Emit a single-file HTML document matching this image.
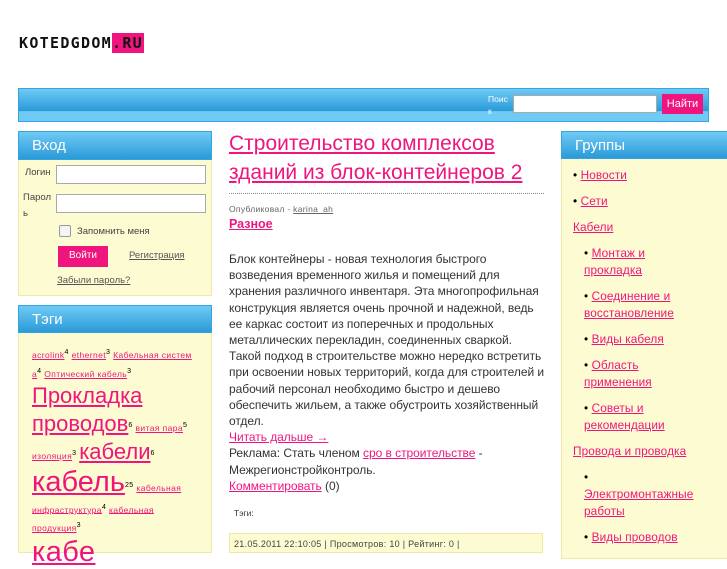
<!DOCTYPE html>
<html><head><meta charset="utf-8"><style>
*{margin:0;padding:0;box-sizing:border-box}
body{width:727px;height:545px;overflow:hidden;background:#fff;font-family:"Liberation Sans","DejaVu Sans",sans-serif;position:relative}
a{color:#f0157e;text-decoration:underline}
.abs{position:absolute}
.hdr{background:linear-gradient(#6fcaf5,#2a9ad8);border:1px solid #34a5e0;color:#fff;font-size:15px;padding-left:13px;line-height:27px}
.box{background:#fdfbd2;border:1px solid #f2e8a6;border-top:none}
input.t{border:1px solid #aaa;background:#fff;position:absolute;height:19px}
.btn{background:#f0157e;color:#fff;font-size:11px;text-align:center;position:absolute}
.body{font-size:12px;color:#333;line-height:16.2px;letter-spacing:-0.05px;white-space:nowrap}
ul{list-style:none}
.g li{font-size:11.8px;line-height:17px;letter-spacing:0.1px;white-space:nowrap}
</style></head><body>
<div class="abs" style="left:19px;top:33px;font:bold 15px 'DejaVu Sans Mono',monospace;letter-spacing:1.3px;color:#111;line-height:20px">KOTEDGDOM<span style="background:#f0157e;padding:1px 1px 1px 0">.RU</span></div>

<div class="abs" style="left:18px;top:88px;width:691px;height:34px;background:linear-gradient(#6fcaf5 0%,#2a9ad8 68%,#6fcaf5 70%,#6fcaf5 100%);border:1px solid #34a5e0"></div>
<div class="abs" style="left:488px;top:93px;font-size:8.5px;color:#fff;line-height:12px;width:24px">Поис<br>к</div>
<input class="t" style="left:513px;top:95px;width:144px;height:18px">
<div class="btn" style="left:662px;top:94px;width:41px;height:20px;line-height:20px">Найти</div>

<!-- Login -->
<div class="abs hdr" style="left:18px;top:131px;width:194px;height:29px">Вход</div>
<div class="abs box" style="left:18px;top:160px;width:194px;height:136px"></div>
<div class="abs" style="left:25px;top:167px;font-size:9.5px;color:#444">Логин</div>
<input class="t" style="left:56px;top:165px;width:150px">
<div class="abs" style="left:23px;top:190px;font-size:9.5px;color:#444;line-height:16px;width:28px">Парол<br>ь</div>
<input class="t" style="left:56px;top:194px;width:150px">
<div class="abs" style="left:59px;top:225px;width:12px;height:12px;border:1px solid #999;background:#f4f4f4;border-radius:2px"></div>
<div class="abs" style="left:77px;top:226px;font-size:9.5px;color:#444">Запомнить меня</div>
<div class="btn" style="left:58px;top:246px;width:50px;height:21px;line-height:20px;font-size:10px">Войти</div>
<a class="abs" style="left:129px;top:250px;font-size:9.5px;color:#555">Регистрация</a>
<a class="abs" style="left:57px;top:275px;font-size:9.5px;color:#555">Забыли пароль?</a>

<!-- Tags -->
<div class="abs hdr" style="left:18px;top:305px;width:194px;height:28px">Тэги</div>
<div class="abs box" style="left:18px;top:333px;width:194px;height:220px"></div>
<div class="abs" style="left:32px;top:344px;width:175px;line-height:16px;font-size:8.5px;letter-spacing:0.4px;white-space:nowrap">
<a>acrolink</a><sup>4</sup> <a>ethernet</a><sup>3</sup> <a>Кабельная систем</a><br><a>а</a><sup>4</sup> <a>Оптический кабель</a><sup>3</sup><br>
<span style="font-size:22px;line-height:28px;letter-spacing:0"><a>Прокладка</a></span><br>
<span style="font-size:22px;line-height:28px;letter-spacing:0"><a>проводов</a></span><sup>6</sup> <a>витая пара</a><sup>5</sup><br>
<a>изоляция</a><sup>3</sup> <span style="font-size:22px;line-height:28px;letter-spacing:0"><a>кабели</a></span><sup>6</sup><br>
<span style="font-size:29px;line-height:33px;letter-spacing:0"><a>кабель</a></span><sup>25</sup> <a>кабельная</a><br>
<a>инфраструктура</a><sup>4</sup> <a>кабельная</a><br><a>продукция</a><sup>3</sup><br>
<span style="font-size:29px;line-height:33px"><a>кабе</a></span>
</div>

<!-- Center -->
<div class="abs" style="left:229px;top:129px;width:320px;font-size:21px;line-height:29px;white-space:nowrap"><a>Строительство комплексов<br>зданий из блок-контейнеров 2</a></div>
<div class="abs" style="left:229px;top:193px;width:315px;border-top:1px dotted #888"></div>
<div class="abs" style="left:229px;top:204px;font-size:8.5px;color:#666;letter-spacing:0.3px">Опубликовал - <a style="color:#666">karina_ah</a></div>
<div class="abs" style="left:229px;top:217px;font-size:12.5px;font-weight:bold"><a>Разное</a></div>
<div class="abs body" style="left:229px;top:251px;width:320px">Блок контейнеры - новая технология быстрого<br>возведения временного жилья и помещений для<br>хранения различного инвентаря. Эта многопрофильная<br>конструкция является очень прочной и надежной, ведь<br>ее каркас состоит из поперечных и продольных<br>металлических перекладин, соединенных сваркой.<br>Такой подход в строительстве можно нередко встретить<br>при освоении новых территорий, когда для строителей и<br>рабочий персонал необходимо быстро и дешево<br>обеспечить жильем, а также обустроить хозяйственный<br>отдел.<br><a>Читать дальше →</a><br>Реклама: Стать членом <a>сро в строительстве</a> -<br>Межрегионстройконтроль.<br><a>Комментировать</a> (0)</div>
<div class="abs" style="left:234px;top:508px;font-size:8.5px;color:#333">Тэги:</div>
<div class="abs" style="left:229px;top:533px;width:314px;height:20px;background:#fdfbd2;border:1px solid #f2e8a6;font-size:9px;color:#444;padding:5px 4px;letter-spacing:0.3px">21.05.2011 22:10:05 | Просмотров: 10 | Рейтинг: 0 |</div>

<!-- Right -->
<div class="abs hdr" style="left:561px;top:131px;width:170px;height:28px">Группы</div>
<div class="abs box" style="left:561px;top:159px;width:170px;height:400px"></div>
<ul class="abs g" style="left:573px;top:167px;width:150px">
<li style="margin-bottom:9px">• <a>Новости</a></li>
<li style="margin-bottom:9px">• <a>Сети</a></li>
<li style="margin-bottom:9px"><a>Кабели</a></li>
<li style="margin:0 0 9px 11px">• <a>Монтаж и<br>прокладка</a></li>
<li style="margin:0 0 9px 11px">• <a>Соединение и<br>восстановление</a></li>
<li style="margin:0 0 9px 11px">• <a>Виды кабеля</a></li>
<li style="margin:0 0 9px 11px">• <a>Область<br>применения</a></li>
<li style="margin:0 0 9px 11px">• <a>Советы и<br>рекомендации</a></li>
<li style="margin-bottom:9px"><a>Провода и проводка</a></li>
<li style="margin:0 0 9px 11px">•<br><a>Электромонтажные<br>работы</a></li>
<li style="margin:0 0 9px 11px">• <a>Виды проводов</a></li>
</ul>
</body></html>
